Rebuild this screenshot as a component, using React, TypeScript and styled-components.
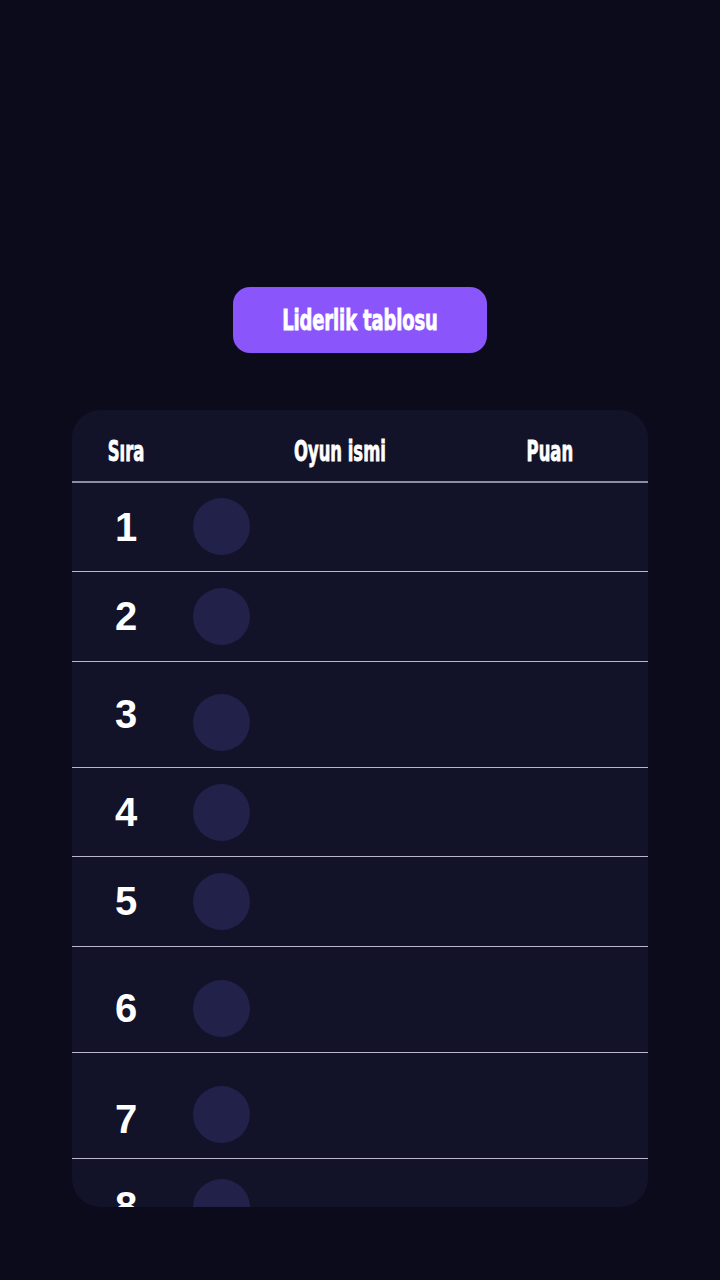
import React from "react";
import styled, { createGlobalStyle } from "styled-components";

const GlobalStyle = createGlobalStyle`
  html, body {
    margin: 0;
    padding: 0;
    background: #0c0b1c;
  }
  body {
    font-family: "Liberation Sans", Arial, sans-serif;
  }
`;

const Page = styled.div`
  min-height: 1280px;
  background: #0c0b1c;
  display: flex;
  flex-direction: column;
  align-items: center;
  padding-top: 287px;
  box-sizing: border-box;
`;

const condensed = `
  font-family: "DejaVu Sans Condensed", "Liberation Sans", sans-serif;
  font-weight: 700;
  color: #ffffff;
  display: inline-block;
  white-space: nowrap;
  -webkit-text-stroke: 0.7px #ffffff;
`;

const TitleButton = styled.button`
  width: 254px;
  height: 66px;
  border: none;
  border-radius: 17px;
  background: #8a55fb;
  display: flex;
  align-items: center;
  justify-content: center;
  padding: 0;
  cursor: pointer;
`;

const TitleText = styled.span`
  ${condensed}
  font-size: 26px;
  letter-spacing: -0.2px;
  transform: scale(0.77, 1.12);
`;

const Card = styled.div`
  margin-top: 57px;
  width: 576px;
  height: 797px;
  background: #121228;
  border-radius: 28px;
  overflow: hidden;
  display: flex;
  flex-direction: column;
`;

const Header = styled.div`
  display: grid;
  grid-template-columns: 108px 320px 100px 1fr;
  align-items: center;
  height: 73px;
  padding-top: 12px;
  box-sizing: border-box;
  border-bottom: 2px solid #8e8ca3;
  flex-shrink: 0;
`;

const HeadCell = styled.div`
  text-align: center;
`;

const HeadText = styled.span`
  ${condensed}
  font-size: 25px;
  transform: scale(0.73, 1.15);
`;

const Row = styled.div<{ $h: number }>`
  display: grid;
  grid-template-columns: 108px 1fr;
  align-items: start;
  height: ${(p) => p.$h}px;
  box-sizing: border-box;
  border-bottom: 1px solid #b9b7c9;
  flex-shrink: 0;
`;

const Rank = styled.div<{ $top: number }>`
  margin-top: ${(p) => p.$top}px;
  height: 57px;
  line-height: 57px;
  text-align: center;
  font-family: "Liberation Sans", Arial, sans-serif;
  font-weight: 700;
  font-size: 40px;
  color: #ffffff;
`;

const Avatar = styled.div<{ $top: number }>`
  margin-top: ${(p) => p.$top}px;
  margin-left: 13px;
  width: 57px;
  height: 57px;
  border-radius: 50%;
  background: #22214a;
`;

const rows = [
  { n: 1, h: 89, num: 16, av: 15 },
  { n: 2, h: 90, num: 16, av: 16 },
  { n: 3, h: 106, num: 24, av: 32 },
  { n: 4, h: 89, num: 16, av: 16 },
  { n: 5, h: 90, num: 16, av: 16 },
  { n: 6, h: 106, num: 33, av: 33 },
  { n: 7, h: 106, num: 38, av: 33 },
  { n: 8, h: 106, num: 19, av: 20 },
];

export default function App() {
  return (
    <>
      <GlobalStyle />
      <Page>
        <TitleButton>
          <TitleText>Liderlik tablosu</TitleText>
        </TitleButton>
        <Card>
          <Header>
            <HeadCell>
              <HeadText>Sıra</HeadText>
            </HeadCell>
            <HeadCell>
              <HeadText>Oyun ismi</HeadText>
            </HeadCell>
            <HeadCell>
              <HeadText>Puan</HeadText>
            </HeadCell>
          </Header>
          {rows.map((r) => (
            <Row key={r.n} $h={r.h}>
              <Rank $top={r.num}>{r.n}</Rank>
              <Avatar $top={r.av} />
            </Row>
          ))}
        </Card>
      </Page>
    </>
  );
}
